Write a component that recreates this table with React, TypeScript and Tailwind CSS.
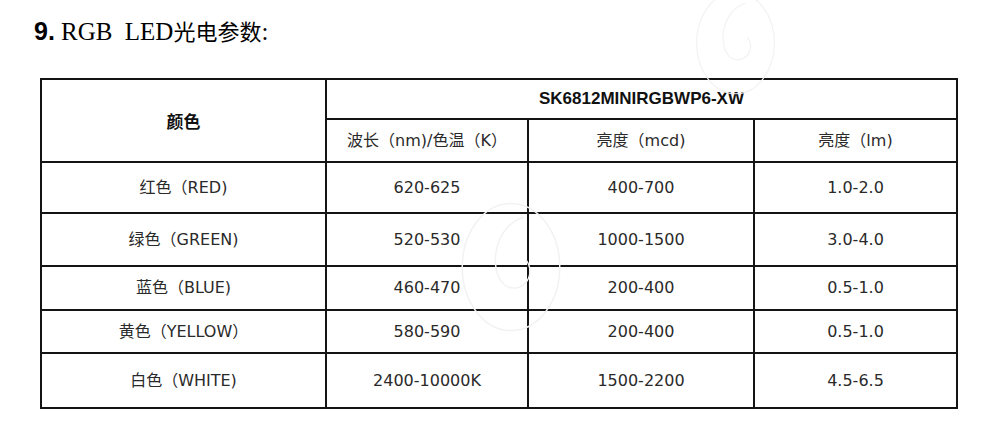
const rows = [
  { name: '红色（RED)', wave: '620-625', mcd: '400-700', lm: '1.0-2.0', h: 'h-[49px]' },
  { name: '绿色（GREEN)', wave: '520-530', mcd: '1000-1500', lm: '3.0-4.0', h: 'h-[51px]' },
  { name: '蓝色（BLUE)', wave: '460-470', mcd: '200-400', lm: '0.5-1.0', h: 'h-[42px]' },
  { name: '黄色（YELLOW）', wave: '580-590', mcd: '200-400', lm: '0.5-1.0', h: 'h-[41px]' },
  { name: '白色（WHITE)', wave: '2400-10000K', mcd: '1500-2200', lm: '4.5-6.5', h: 'h-[53px]' },
]

const cellFont = "[font-family:'DejaVu_Sans','Noto_Sans_CJK_SC',sans-serif]"

function Watermark({ className }: { className: string }) {
  return (
    <svg className={className} viewBox="0 0 100 130" fill="none" stroke="#f2f2f2" strokeWidth="1.4">
      <ellipse cx="50" cy="65" rx="46" ry="60" />
      <path d="M62 18 C34 26 28 68 44 82 C58 92 76 74 64 58" />
    </svg>
  )
}

export default function App() {
  return (
    <div className="relative w-[998px] h-[430px] bg-white overflow-hidden">
      <div className="pt-[17px] pl-[34px]">
        <h2 className="h-[26px] leading-[26px] text-[25px] text-black whitespace-pre">
          <span className="font-bold [font-family:'Liberation_Sans',sans-serif]">9.</span>
          <span className="[font-family:'Liberation_Serif',serif]"> RGB </span>
          <span className="ml-[6px] [font-family:'Liberation_Serif',serif]">LED</span>
          <span className="[font-family:'Noto_Sans_CJK_SC',sans-serif] text-[22px]">光电参数</span>
          <span className="[font-family:'Liberation_Serif',serif]">:</span>
        </h2>
      </div>

      <div
        className={`ml-[40px] mt-[35px] w-[918px] grid grid-cols-[283px_200px_224px_201px] grid-rows-[38px_41px] gap-[2px] p-[2px] bg-[#141414] text-[16px] text-[#2a2a2a] ${cellFont}`}
      >
        <div className="row-span-2 bg-white flex items-center justify-center font-bold text-[17px] text-[#111] [font-family:'Noto_Sans_CJK_SC',sans-serif]">
          颜色
        </div>
        <div className="col-span-3 bg-white flex items-center justify-center font-bold text-[17px] text-[#111] [font-family:'Liberation_Sans',sans-serif]">
          SK6812MINIRGBWP6-XW
        </div>
        <div className="bg-white flex items-center justify-center">波长（nm)/色温（K）</div>
        <div className="bg-white flex items-center justify-center">亮度（mcd)</div>
        <div className="bg-white flex items-center justify-center">亮度（lm)</div>

        {rows.map((r) => (
          <div key={r.name} className="contents">
            <div className={`${r.h} bg-white flex items-center justify-center`}>{r.name}</div>
            <div className={`${r.h} bg-white flex items-center justify-center`}>{r.wave}</div>
            <div className={`${r.h} bg-white flex items-center justify-center`}>{r.mcd}</div>
            <div className={`${r.h} bg-white flex items-center justify-center`}>{r.lm}</div>
          </div>
        ))}
      </div>

      {/* faint watermarks */}
      <Watermark className="absolute left-[683px] top-[-12px] w-[105px] h-[110px] pointer-events-none" />
      <Watermark className="absolute left-[458px] top-[198px] w-[106px] h-[138px] pointer-events-none" />
    </div>
  )
}
